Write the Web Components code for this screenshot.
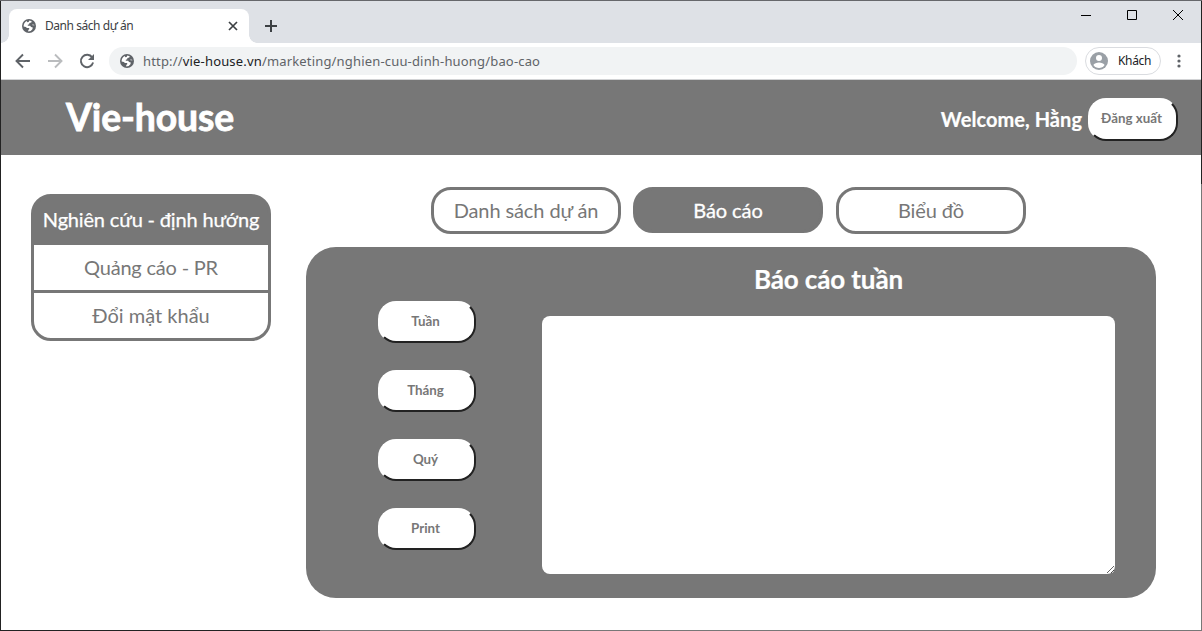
<!DOCTYPE html>
<html lang="vi">
<head>
<meta charset="utf-8">
<title>Danh sách dự án</title>
<style>
html,body{margin:0;height:100%;overflow:hidden;background:#fff}
body{font-family:Lato,"Liberation Sans",sans-serif;color:#777}
</style>
</head>
<body>
<app-window></app-window>
<script>
const define = (name, html) => {
  const t = document.createElement('template');
  t.innerHTML = '<style>*{box-sizing:border-box}svg{display:block;flex:none}</style>' + html;
  customElements.define(name, class extends HTMLElement {
    constructor() {
      super();
      this.attachShadow({mode: 'open'}).append(t.content.cloneNode(true));
    }
  });
};

define('globe-icon', `<style>:host{display:block;width:14px;height:14px;flex:none}</style>
<svg width="14" height="14" viewBox="0 0 14 14"><circle cx="7" cy="7" r="7" fill="#5f6368"/>
<path d="M7.4 1.5 9.7 2.2 9.3 3.6 7.4 4 7.2 5.2 5.8 5.8 5.8 6.7 8.2 6.8 9 8.1 10.8 8.4 10.4 10.2 8.7 12 6.2 12.4 6.3 10.9 7.4 9.9 7 9.1 4.9 8.9 3.9 7.9 1.6 7.6C1.4 5.4 2.8 2.9 4.6 2L5.4 3.2 6.6 2.9Z" fill="#fff"/><path d="M9.8 5 12 4.9 12.5 7 10.7 6.7Z" fill="#fff" opacity=".35"/></svg>`);

define('tab-strip', `<style>
:host{display:flex;height:42px;background:#dee1e6;font:12px/16px "Noto Sans",sans-serif;color:#3c4043;padding-left:8px;flex:none}
.tab{position:relative;width:240px;height:34px;margin-top:8px;background:#fff;border-radius:8px 8px 0 0;display:flex;align-items:center;padding:0 11px 0 13px}
.tab::before,.tab::after{content:"";position:absolute;bottom:0;width:8px;height:8px}
.tab::before{left:-8px;background:radial-gradient(circle at 0 0,transparent 7.5px,#fff 8px)}
.tab::after{right:-8px;background:radial-gradient(circle at 100% 0,transparent 7.5px,#fff 8px)}
span{margin-left:9px;flex:1;letter-spacing:-.45px;white-space:nowrap}
.plus{margin:19px 0 0 16px}
.win{margin:9px 17px 0 auto;display:flex;gap:34px}
</style>
<div class="tab"><globe-icon></globe-icon><span>Danh sách dự án</span>
<svg width="10" height="10" viewBox="0 0 10 10"><path d="M1 1 9 9M9 1 1 9" stroke="#3c4043" stroke-width="1.7"/></svg></div>
<svg class="plus" width="12" height="12" viewBox="0 0 12 12"><path d="M6 0V12M0 6H12" stroke="#3c4043" stroke-width="2"/></svg>
<div class="win">
<svg width="12" height="12" viewBox="0 0 12 12"><path d="M1 5.5H11" stroke="#000"/></svg>
<svg width="12" height="12" viewBox="0 0 12 12"><path d="M1.5.5H10.5V9.5H1.5Z" fill="none" stroke="#000"/></svg>
<svg width="12" height="12" viewBox="0 0 12 12"><path d="M1 0 11 10M11 0 1 10" stroke="#000"/></svg>
</div>`);

define('tool-bar', `<style>
:host{display:flex;align-items:center;height:37px;background:#fff;border-bottom:1px solid #d2d3d5;padding:0 17px 0 14px;flex:none;font-family:"Noto Sans",sans-serif}
.nav{display:flex;gap:16px;width:94px}
.url{width:968px;height:28px;border-radius:14px;background:#f1f3f4;display:flex;align-items:center;padding-left:11px;font-size:13px;line-height:20px;color:#5f6368}
.url span{margin-left:9px;white-space:pre;letter-spacing:.17px}
b{font-weight:400;color:#202124}
.user{margin-left:8px;width:76px;height:28px;border:1px solid #dadce0;border-radius:14px;display:flex;align-items:center;padding-left:4px;font-size:12px;line-height:16px;color:#202124}
.user span{margin-left:10px;letter-spacing:-.35px}
.dots{margin-left:16px}
</style>
<div class="nav">
<svg width="16" height="16" viewBox="0 0 16 16"><path d="M15 8H2M8 1.5 1.5 8 8 14.5" fill="none" stroke="#5f6368" stroke-width="1.9"/></svg>
<svg width="16" height="16" viewBox="0 0 16 16"><path d="M1 8H14M8 1.5 14.5 8 8 14.5" fill="none" stroke="#babcbe" stroke-width="1.9"/></svg>
<svg width="16" height="16" viewBox="0 0 16 16"><path d="M13.2 4.4A6.2 6.2 0 1 0 14.1 9.6" fill="none" stroke="#5f6368" stroke-width="1.9"/><path d="M15 1V7H9Z" fill="#5f6368"/></svg>
</div>
<div class="url"><globe-icon></globe-icon><span>http://<b>vie-house.vn</b>/marketing/nghien-cuu-dinh-huong/bao-cao</span></div>
<div class="user"><svg width="18" height="18" viewBox="0 0 18 18"><circle cx="9" cy="9" r="9" fill="#9aa0a6"/><circle cx="9" cy="6" r="3" fill="#fff"/><path d="M3.4 13C4 11.4 6.8 10.4 9 10.4S14 11.4 14.6 13A6.8 6.8 0 0 1 3.4 13Z" fill="#fff"/></svg><span>Khách</span></div>
<svg class="dots" width="4" height="14" viewBox="0 0 4 14"><g fill="#5f6368"><circle cx="2" cy="2" r="1.6"/><circle cx="2" cy="7" r="1.6"/><circle cx="2" cy="12" r="1.6"/></g></svg>`);

define('pill-button', `<style>
:host{display:block;flex:none;width:98px;height:42px}
button{display:block;width:100%;height:100%;margin:0;padding:0 3px 2px 0;background:#fff;border:2px solid;border-color:#fff #222 #222 #fff;border-radius:18px;font:700 13.33px/16px Lato,"Liberation Sans",sans-serif;color:#777;white-space:nowrap}
</style><button><slot></slot></button>`);

define('site-header', `<style>
:host{display:flex;align-items:center;height:75px;background:#777;color:#fff;padding:0 23px 0 65px;flex:none}
h1{margin:-2px auto 0 0;font-size:37.3px;line-height:44px;font-weight:700;letter-spacing:-.1px;-webkit-text-stroke:.8px #fff}
.hi{font-size:20px;font-weight:700;line-height:24px;margin:2px 6px 0 0;white-space:nowrap;letter-spacing:.05px;-webkit-text-stroke:.2px #fff}
pill-button{width:90px;height:43px;margin-top:3px}
pill-button{--r:20px}
</style><h1>Vie-house</h1><div class="hi">Welcome, Hằng</div><pill-button>Đăng xuất</pill-button>`);

define('side-menu', `<style>
:host{display:block;box-sizing:border-box;width:240px;height:147px;border:3px solid #777;border-radius:20px;background:linear-gradient(#777 48px,#fff 48px);font-size:20px;text-align:center;flex:none;margin-top:7px;white-space:nowrap}
div{height:45px;line-height:44px;letter-spacing:-.2px}
.on{height:48px;color:#fff;-webkit-text-stroke:.25px #fff;letter-spacing:-.17px}
.last{height:48px;border-top:3px solid #777;letter-spacing:0}
</style><div class="on">Nghiên cứu - định hướng</div><div>Quảng cáo - PR</div><div class="last">Đổi mật khẩu</div>`);

define('nav-tab', `<style>
:host{display:block;width:190px;height:47px;border:3px solid #777;border-radius:20px;box-sizing:border-box;font-size:20px;line-height:40px;text-align:center;white-space:nowrap;letter-spacing:-.1px}
:host([active]){height:46px;background:#777;color:#fff;-webkit-text-stroke:.3px #fff;margin:0 13px 0 12px}
</style><slot></slot>`);

define('report-panel', `<style>
:host{display:flex;width:850px;height:351px;border-radius:30px;background:#777}
.side{display:flex;flex-direction:column;gap:27px;padding:54px 0 0 72px;width:236px}
.main{width:573px;display:flex;flex-direction:column}
h2{margin:14px 0 19px;font-size:26px;line-height:36px;color:#fff;text-align:center;font-weight:700;letter-spacing:-.12px;-webkit-text-stroke:.2px #fff}
textarea{display:block;width:573px;height:258px;margin:0;border:0;border-radius:8px;background:#fff;resize:both;outline:0}
</style>
<div class="side"><pill-button>Tuần</pill-button><pill-button>Tháng</pill-button><pill-button>Quý</pill-button><pill-button>Print</pill-button></div>
<div class="main"><h2>Báo cáo tuần</h2><textarea></textarea></div>`);

define('app-window', `<style>
:host{display:grid;grid-template:1px 629px 1px / 1px 1200px 1px;width:1202px;height:631px}
.t{grid-area:1/1/2/4;background:#66676b}
.l{grid-area:2/1/3/2;background:#222}
.r{grid-area:2/3/3/4;background:linear-gradient(#222 183px,#777 183px)}
.b{grid-area:3/1/4/4;background:linear-gradient(90deg,#222 320px,#777 320px)}
.c{grid-area:2/2/3/3;display:flex;flex-direction:column;background:#fff}
.body{display:flex;gap:35px;padding:32px 45px 0 30px}
.tabs{display:flex;height:60px;padding-left:125px}
</style>
<div class="t"></div><div class="l"></div><div class="r"></div><div class="b"></div>
<div class="c"><tab-strip></tab-strip><tool-bar></tool-bar><site-header></site-header>
<div class="body"><side-menu></side-menu><div>
<div class="tabs"><nav-tab>Danh sách dự án</nav-tab><nav-tab active>Báo cáo</nav-tab><nav-tab>Biểu đồ</nav-tab></div>
<report-panel></report-panel></div></div></div>`);
</script>
</body>
</html>
